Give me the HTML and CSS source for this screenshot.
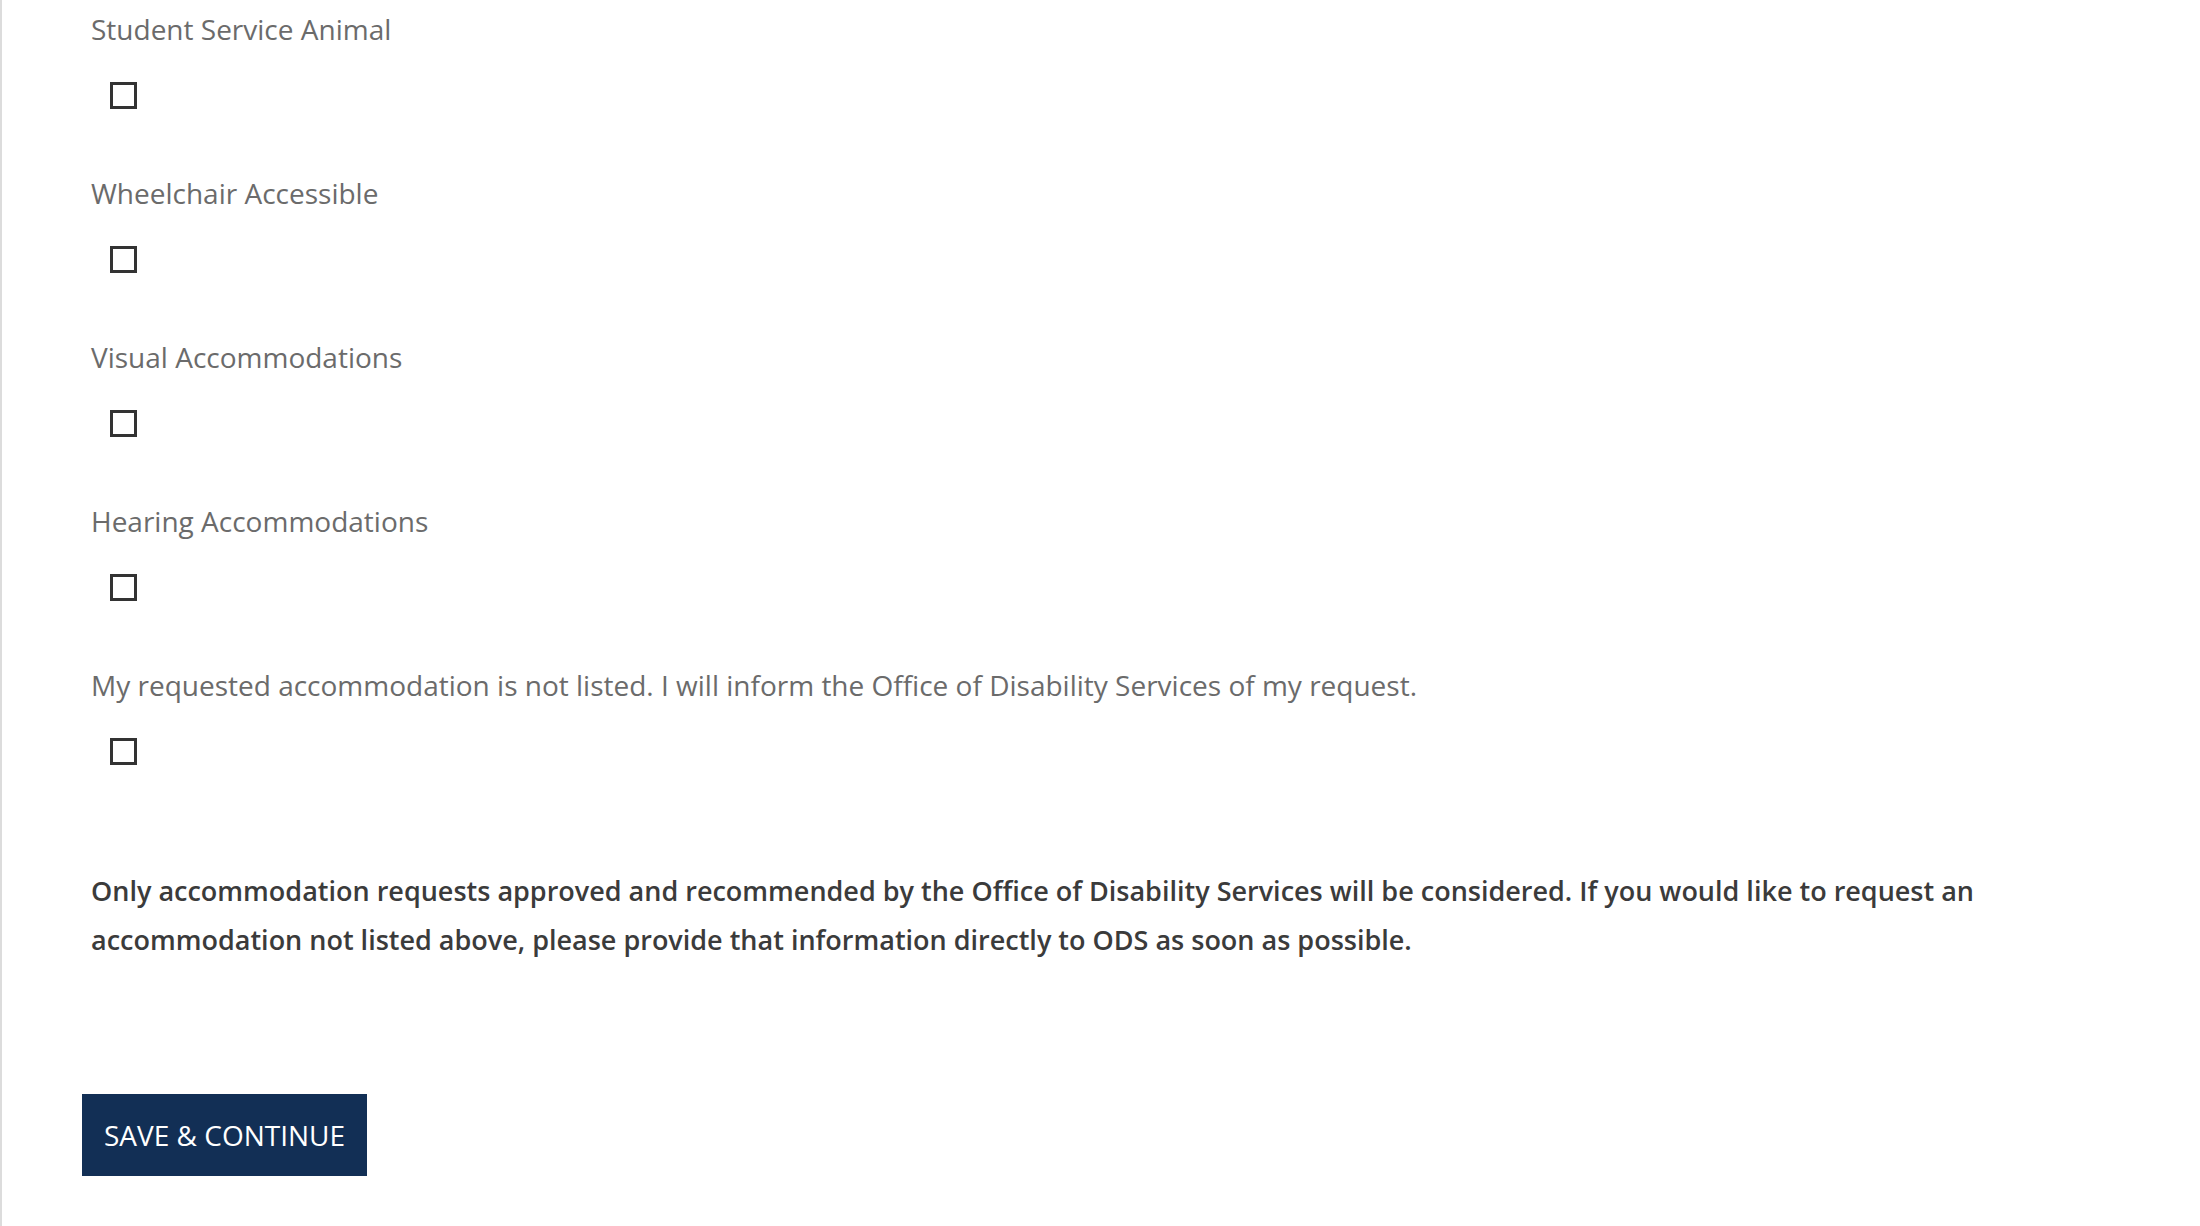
FILE: index.html
```html
<!DOCTYPE html>
<html lang="en">
<head>
<meta charset="UTF-8">
<meta name="viewport" content="width=device-width, initial-scale=1.0">
<title>Accommodation Requests</title>
<link rel="stylesheet" href="styles.css">
</head>
<body>

<div class="page">
  <form class="request-form">

    <div class="field">
      <label for="animal">Student Service Animal</label>
      <input type="checkbox" id="animal">
    </div>

    <div class="field">
      <label for="wheelchair">Wheelchair Accessible</label>
      <input type="checkbox" id="wheelchair">
    </div>

    <div class="field">
      <label for="visual">Visual Accommodations</label>
      <input type="checkbox" id="visual">
    </div>

    <div class="field">
      <label for="hearing">Hearing Accommodations</label>
      <input type="checkbox" id="hearing">
    </div>

    <div class="field">
      <label for="notlisted">My requested accommodation is not listed. I will inform the Office of Disability Services of my request.</label>
      <input type="checkbox" id="notlisted">
    </div>

    <p class="notice">Only accommodation requests approved and recommended by the Office of Disability Services will be considered. If you would like to request an accommodation not listed above, please provide that information directly to ODS as soon as possible.</p>

    <button type="button" class="save-btn">SAVE &amp; CONTINUE</button>

  </form>
</div>

</body>
</html>
```

FILE: styles.css
```css
html, body {
    margin: 0;
    padding: 0;
    height: 100%;
    background-color: #fff;
    font-family: "Open Sans", "Noto Sans", Arial, sans-serif;
}

.page {
    min-height: 100%;
    box-sizing: border-box;
    border-left: 2px solid #dcdcdc;
    padding: 8px 0 0 89px;
}

.request-form {
    display: flex;
    flex-direction: column;
    align-items: flex-start;
}

.field {
    display: flex;
    flex-direction: column;
    align-items: flex-start;
    margin-bottom: 63px;
}

.field label {
    font-size: 28px;
    line-height: 42px;
    color: #6b6b6b;
}

.field input[type="checkbox"] {
    -webkit-appearance: none;
    appearance: none;
    width: 27px;
    height: 27px;
    margin: 32px 0 0 19px;
    border: 3px solid #333;
    box-sizing: border-box;
    background: #fff;
    cursor: pointer;
}

.field input[type="checkbox"]:checked {
    background: #333;
}

.notice {
    margin: 38px 0 0;
    font-size: 27px;
    line-height: 49px;
    font-weight: 600;
    color: #3b3b3b;
    max-width: 1960px;
}

.save-btn {
    margin: 130px 0 40px -9px;
    padding: 0 22px;
    height: 82px;
    background-color: #122f55;
    color: #fff;
    border: none;
    font-family: inherit;
    font-size: 28px;
    cursor: pointer;
}

.save-btn:hover {
    background-color: #1b3d6b;
}
```
